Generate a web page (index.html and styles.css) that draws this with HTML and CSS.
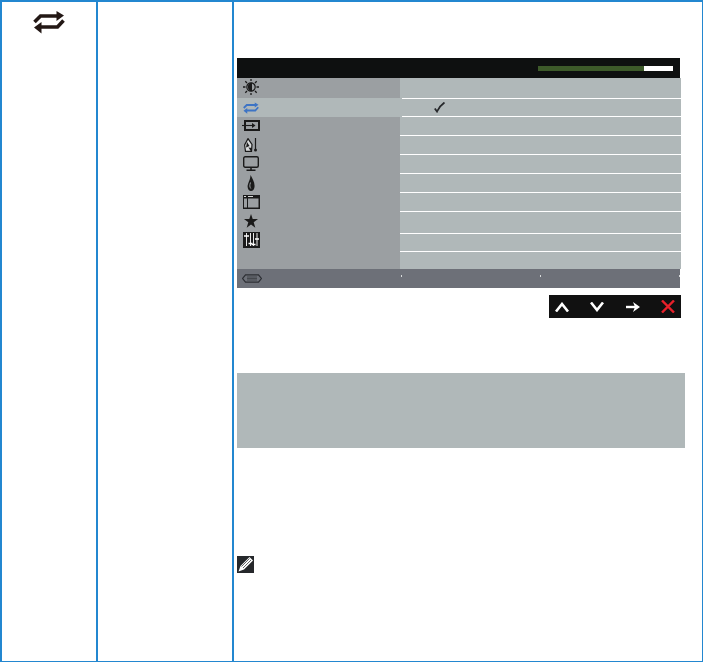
FILE: index.html
```html
<!DOCTYPE html>
<html lang="en">
<head>
    <meta charset="UTF-8">
    <meta name="viewport" content="width=device-width, initial-scale=1.0">
    <title>Input Source</title>
    <link rel="stylesheet" href="styles.css">
</head>
<body>

    <svg class="defs" width="0" height="0">
        <symbol id="swap" viewBox="0 0 32 24">
            <path d="M1.500 12L7.500 6H25M30.500 10.500L24.500 17H7" fill="none" stroke="currentColor" stroke-width="3.600"/>
            <path d="M23.500 1L31 5.500L23.500 11ZM8.500 12L1 17.500L8.500 23.500Z" fill="currentColor"/>
        </symbol>
    </svg>

    <div class="page">
        <div class="col col-icon">
            <svg class="swap-big"><use href="#swap"/></svg>
        </div>
        <div class="col"></div>
        <div class="col col-main">

            <div class="osd">
                <div class="osd-head">
                    <div class="level"><div class="level-fill"></div></div>
                </div>
                <div class="osd-body">
                    <div class="menu">
                        <div class="menu-row">
                            <svg class="ico" width="18" height="16" viewBox="0 0 18 16">
                                <circle cx="9" cy="8" r="4.200" fill="#9b9fa2" stroke="#1a1a1a" stroke-width="1.200"/>
                                <path d="M10 3.800a4.200 4.200 0 0 0 0 8.400z" fill="#1a1a1a"/>
                                <path d="M9 0v2M9 14v2M1 8h2.500M14.500 8H17M3.300 2.300l1.700 1.700M13 12l1.700 1.700M14.700 2.300L13 4M5 12l-1.700 1.700" stroke="#1a1a1a" stroke-width="1.300"/>
                            </svg>
                        </div>
                        <div class="menu-row menu-row-on">
                            <svg class="swap-small"><use href="#swap"/></svg>
                        </div>
                        <div class="menu-row">
                            <svg class="ico" width="18" height="11" viewBox="0 0 18 11">
                                <rect x="3" y="1" width="14" height="9" fill="none" stroke="#1a1a1a" stroke-width="2"/>
                                <path d="M0 5.500h11" stroke="#1a1a1a" stroke-width="1.100"/>
                                <path d="M10 3l3.500 2.500L10 8z" fill="#1a1a1a"/>
                            </svg>
                        </div>
                        <div class="menu-row">
                            <svg class="ico" width="14" height="14" viewBox="0 0 14 14">
                                <path d="M4 0.600L8 6.500L7.500 13.400H1.500L0.600 7Z" fill="#d8dadb" stroke="#1a1a1a" stroke-width="1.200"/>
                                <path d="M3 4L5.500 8L2 9.500zM4.500 9.500l3.500.5-1 3.500z" fill="#1a1a1a"/>
                                <path d="M11.500 0v11" stroke="#1a1a1a" stroke-width="1.200"/>
                                <circle cx="11.500" cy="12" r="1.500" fill="#1a1a1a"/>
                            </svg>
                        </div>
                        <div class="menu-row">
                            <svg class="ico" width="16" height="15" viewBox="0 0 16 15">
                                <rect x="0.700" y="0.700" width="14.600" height="10.600" rx="1.500" fill="none" stroke="#1a1a1a" stroke-width="1.400"/>
                                <path d="M8 12v2M3.500 14.300h9" stroke="#1a1a1a" stroke-width="1.500"/>
                            </svg>
                        </div>
                        <div class="menu-row">
                            <svg class="ico" width="8" height="16" viewBox="0 0 8 16">
                                <path d="M3.500 0C5 3 7.600 6.500 7.600 11C7.600 14 6 16 4 16C2 16 0.600 14 0.600 11.500C0.600 8 3.400 5 3.500 0Z" fill="#1a1a1a"/>
                                <path d="M3.500 7.500C2.600 10 2.500 12 3.800 13.500" fill="none" stroke="#9b9fa2" stroke-width="1"/>
                            </svg>
                        </div>
                        <div class="menu-row">
                            <svg class="ico" width="17" height="14" viewBox="0 0 17 14">
                                <rect width="17" height="14" fill="#1a1a1a"/>
                                <rect x="1" y="3.500" width="3" height="9" fill="#9b9fa2"/>
                                <rect x="5" y="3.500" width="10.500" height="9" fill="#9b9fa2"/>
                                <path d="M1 1.500h2M5 1.500h5" stroke="#d8dadb"/>
                            </svg>
                        </div>
                        <div class="menu-row">
                            <svg class="ico" width="14" height="14" viewBox="0 0 14 14">
                                <path d="M7 0l1.700 5H14L9.700 8.300l1.600 5.400L7 10.500l-4.300 3.200 1.600-5.400L0 5h5.300z" fill="#1a1a1a"/>
                            </svg>
                        </div>
                        <div class="menu-row">
                            <svg class="ico" width="17" height="16" viewBox="0 0 17 16">
                                <rect width="17" height="16" fill="#1a1a1a"/>
                                <path d="M3.500 1v13M7.500 1v13M10.500 1v13M14 1v13" stroke="#e8e8e8" stroke-width="1"/>
                                <path d="M1 4h5M5.500 11.500h4M8.500 12.500h4M12 7h4" stroke="#fff" stroke-width="1.400"/>
                            </svg>
                        </div>
                    </div>
                    <div class="opts">
                        <div class="opt"></div>
                        <div class="opt opt-check">
                            <svg class="check" width="11" height="11" viewBox="0 0 11 11">
                                <path d="M0.800 6.500L3 9.500C4.500 6 7 3 10.500 0.500" fill="none" stroke="#26282b" stroke-width="1.800"/>
                            </svg>
                        </div>
                        <div class="opt"></div>
                        <div class="opt"></div>
                        <div class="opt"></div>
                        <div class="opt"></div>
                        <div class="opt"></div>
                        <div class="opt"></div>
                        <div class="opt"></div>
                        <div class="opt opt-last"></div>
                    </div>
                </div>
                <div class="osd-foot">
                    <svg class="pad" width="20" height="9" viewBox="0 0 20 9">
                        <path d="M3.500 0.800H16.500L19.400 4.500L16.500 8.200H3.500L0.600 4.500Z" fill="none" stroke="#2c2e33" stroke-width="1.200"/>
                        <path d="M5 3h10M5 4.500h10M5 6h10" stroke="#3b3d43" stroke-width="0.800"/>
                    </svg>
                    <div class="ticks">
                        <span class="tick"></span>
                        <span class="tick"></span>
                        <span class="tick"></span>
                    </div>
                </div>
            </div>

            <div class="keys">
                <svg width="14" height="10" viewBox="0 0 14 10">
                    <path d="M1 9.500L7 2L13 9.500" fill="none" stroke="#fff" stroke-width="2.600"/>
                </svg>
                <svg width="14" height="10" viewBox="0 0 14 10">
                    <path d="M1 0.500L7 8L13 0.500" fill="none" stroke="#fff" stroke-width="2.600"/>
                </svg>
                <svg width="14" height="10" viewBox="0 0 14 10">
                    <path d="M0 5H10" stroke="#fff" stroke-width="2.400"/>
                    <path d="M7 0L14 5L7 10L9 5Z" fill="#fff"/>
                </svg>
                <svg width="14" height="13" viewBox="0 0 14 13">
                    <path d="M1 0.500L13 12.500M13 0.500L1 12.500" stroke="#e8202a" stroke-width="2.400"/>
                </svg>
            </div>

            <div class="greybox"></div>

            <div class="note">
                <svg width="17" height="17" viewBox="0 0 17 17">
                    <path d="M1.500 15.500L3.500 10L12.500 1L16 4.500L7 13.500Z" fill="#fff"/>
                    <path d="M4.500 10.500L12.500 2.500M6 12L14 4" stroke="#26282b" stroke-width="0.700"/>
                </svg>
            </div>

        </div>
    </div>

</body>
</html>
```

FILE: styles.css
```css
body {
    margin: 0;
    background-color: #fff;
}

.defs {
    display: block;
    height: 0;
}

.page {
    display: grid;
    grid-template-columns: 94px 136px 1fr;
    box-sizing: border-box;
    width: 703px;
    height: 662px;
    border: solid #2387d0;
    border-width: 2px 1px 1px 2px;
}

.col + .col {
    border-left: 2px solid #2387d0;
}

.col-icon {
    display: flex;
    justify-content: center;
    align-items: flex-start;
    padding-top: 8px;
}

.swap-big {
    width: 32px;
    height: 24px;
    color: #231815;
}

.swap-small {
    width: 16px;
    height: 12px;
    color: #3d74c5;
}

.col-main {
    display: flex;
    flex-direction: column;
    padding: 56px 0 0 3px;
}

.osd {
    width: 443px;
}

.osd-head {
    display: flex;
    justify-content: flex-end;
    align-items: center;
    height: 20px;
    padding-right: 7px;
    background-color: #0e1010;
    box-sizing: border-box;
}

.level {
    width: 135px;
    height: 5px;
    background-color: #fff;
}

.level-fill {
    width: 106px;
    height: 100%;
    background-color: #3d5a2a;
}

.osd-body {
    display: flex;
    height: 191px;
}

.menu {
    display: flex;
    flex-direction: column;
    flex: none;
    width: 163px;
    background-color: #9b9fa2;
}

.menu-row {
    display: flex;
    justify-content: center;
    align-items: center;
    flex: none;
    width: 28px;
    height: 19px;
}

.menu-row:first-child {
    height: 20px;
}

.menu-row-on {
    position: relative;
    width: 165px;
    padding-right: 137px;
    box-sizing: border-box;
    background-color: #b0b8b9;
}

.ico {
    flex: none;
    margin-bottom: 2px;
}

.opts {
    display: grid;
    grid-template-rows: 21px 18px repeat(5, 19px) 22px 18px 17px;
    flex: none;
    width: 281px;
    background-color: #b0b8b9;
}

.opt {
    box-sizing: border-box;
    border-bottom: 1px solid #fff;
}

.opt-last {
    border-bottom: none;
}

.opt-check {
    display: flex;
    align-items: center;
    padding-left: 34px;
}

.osd-foot {
    display: flex;
    align-items: center;
    height: 19px;
    background-color: #6d7078;
}

.pad {
    flex: none;
    margin-left: 5px;
}

.ticks {
    display: flex;
    justify-content: space-between;
    flex: 1;
    margin-left: 139px;
    height: 2px;
    margin-top: -5px;
}

.tick {
    width: 1px;
    height: 2px;
    background-color: #d8dadb;
}

.keys {
    display: flex;
    justify-content: space-between;
    align-items: center;
    width: 132px;
    height: 23px;
    margin: 7px 0 0 312px;
    padding: 0 6px;
    box-sizing: border-box;
    background-color: #111;
}

.greybox {
    width: 448px;
    height: 75px;
    margin-top: 55px;
    background-color: #b0b8b9;
}

.note {
    width: 17px;
    height: 17px;
    margin-top: 108px;
    background-color: #26282b;
}

.note svg {
    display: block;
}
```
